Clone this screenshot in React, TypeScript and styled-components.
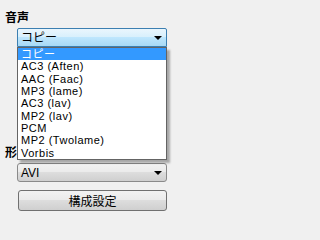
import React from 'react';
import styled, { createGlobalStyle } from 'styled-components';

const GlobalStyle = createGlobalStyle`
  html, body {
    margin: 0;
    padding: 0;
    background: #f0f0f0;
  }
  body {
    font-family: "Liberation Sans", "Noto Sans CJK JP", sans-serif;
    color: #000;
  }
`;

const Panel = styled.div`
  width: 316px;
  height: 232px;
  box-sizing: border-box;
  padding: 10px 0 0 5px;
  overflow: hidden;
`;

const Group = styled.div<{ $gap?: number }>`
  display: flex;
  flex-direction: column;
  margin-top: ${(p) => p.$gap || 0}px;
`;

const Label = styled.div`
  font-family: "Noto Sans CJK JP", sans-serif;
  font-weight: bold;
  font-size: 12px;
  line-height: 14px;
  height: 14px;
`;

const ComboWrap = styled.div`
  position: relative;
  margin: 4px 0 0 12px;
  width: 150px;
`;

const Combo = styled.div<{ $hot?: boolean }>`
  box-sizing: border-box;
  height: 19px;
  display: flex;
  align-items: center;
  justify-content: space-between;
  padding: 0 4px 0 3px;
  border: 1px solid ${(p) => (p.$hot ? '#3c7fb1' : '#8a8a8a')};
  border-radius: ${(p) => (p.$hot ? '2px 2px 0 0' : '3px')};
  background: ${(p) =>
    p.$hot
      ? 'linear-gradient(#eaf6fd 0%, #d9f0fc 45%, #bee6fd 50%, #a7d9f5 100%)'
      : 'linear-gradient(#f2f2f2 0%, #ebebeb 45%, #dddddd 50%, #cfcfcf 100%)'};
  font-size: 12px;
  line-height: 14px;
`;

const Arrow = styled.span`
  width: 0;
  height: 0;
  border-left: 4px solid transparent;
  border-right: 4px solid transparent;
  border-top: 4px solid #000;
  margin-top: 1px;
`;

const List = styled.ul`
  position: absolute;
  top: 19px;
  left: 0;
  width: 150px;
  box-sizing: border-box;
  margin: 0;
  padding: 0;
  list-style: none;
  background: #fff;
  border: 1px solid #646464;
  box-shadow: 3px 3px 2px rgba(0, 0, 0, 0.3);
  z-index: 2;
`;

const Item = styled.li<{ $selected?: boolean }>`
  height: 12.35px;
  line-height: 12.35px;
  padding-left: 3px;
  font-size: 11px;
  letter-spacing: 0.5px;
  white-space: nowrap;
  background: ${(p) => (p.$selected ? '#3399ff' : 'transparent')};
  color: ${(p) => (p.$selected ? '#fff' : '#000')};
`;

const Button = styled.button`
  box-sizing: border-box;
  margin: 8px 0 0 13px;
  width: 149px;
  height: 21px;
  padding: 0;
  border: 1px solid #707070;
  border-radius: 3px;
  background: linear-gradient(#f2f2f2 0%, #ebebeb 45%, #dddddd 50%, #cfcfcf 100%);
  font-family: "Noto Sans CJK JP", sans-serif;
  font-size: 12px;
  line-height: 14px;
  color: #000;
`;

const codecs = [
  'コピー',
  'AC3 (Aften)',
  'AAC (Faac)',
  'MP3 (lame)',
  'AC3 (lav)',
  'MP2 (lav)',
  'PCM',
  'MP2 (Twolame)',
  'Vorbis',
];

export default function App() {
  return (
    <>
      <GlobalStyle />
      <Panel>
        <Group>
          <Label>音声</Label>
          <ComboWrap>
            <Combo $hot>
              <span>コピー</span>
              <Arrow />
            </Combo>
            <List>
              {codecs.map((c, i) => (
                <Item key={c} $selected={i === 0}>
                  {c}
                </Item>
              ))}
            </List>
          </ComboWrap>
        </Group>
        <Group $gap={98}>
          <Label>形式</Label>
          <ComboWrap>
            <Combo>
              <span>AVI</span>
              <Arrow />
            </Combo>
          </ComboWrap>
          <Button>構成設定</Button>
        </Group>
      </Panel>
    </>
  );
}
